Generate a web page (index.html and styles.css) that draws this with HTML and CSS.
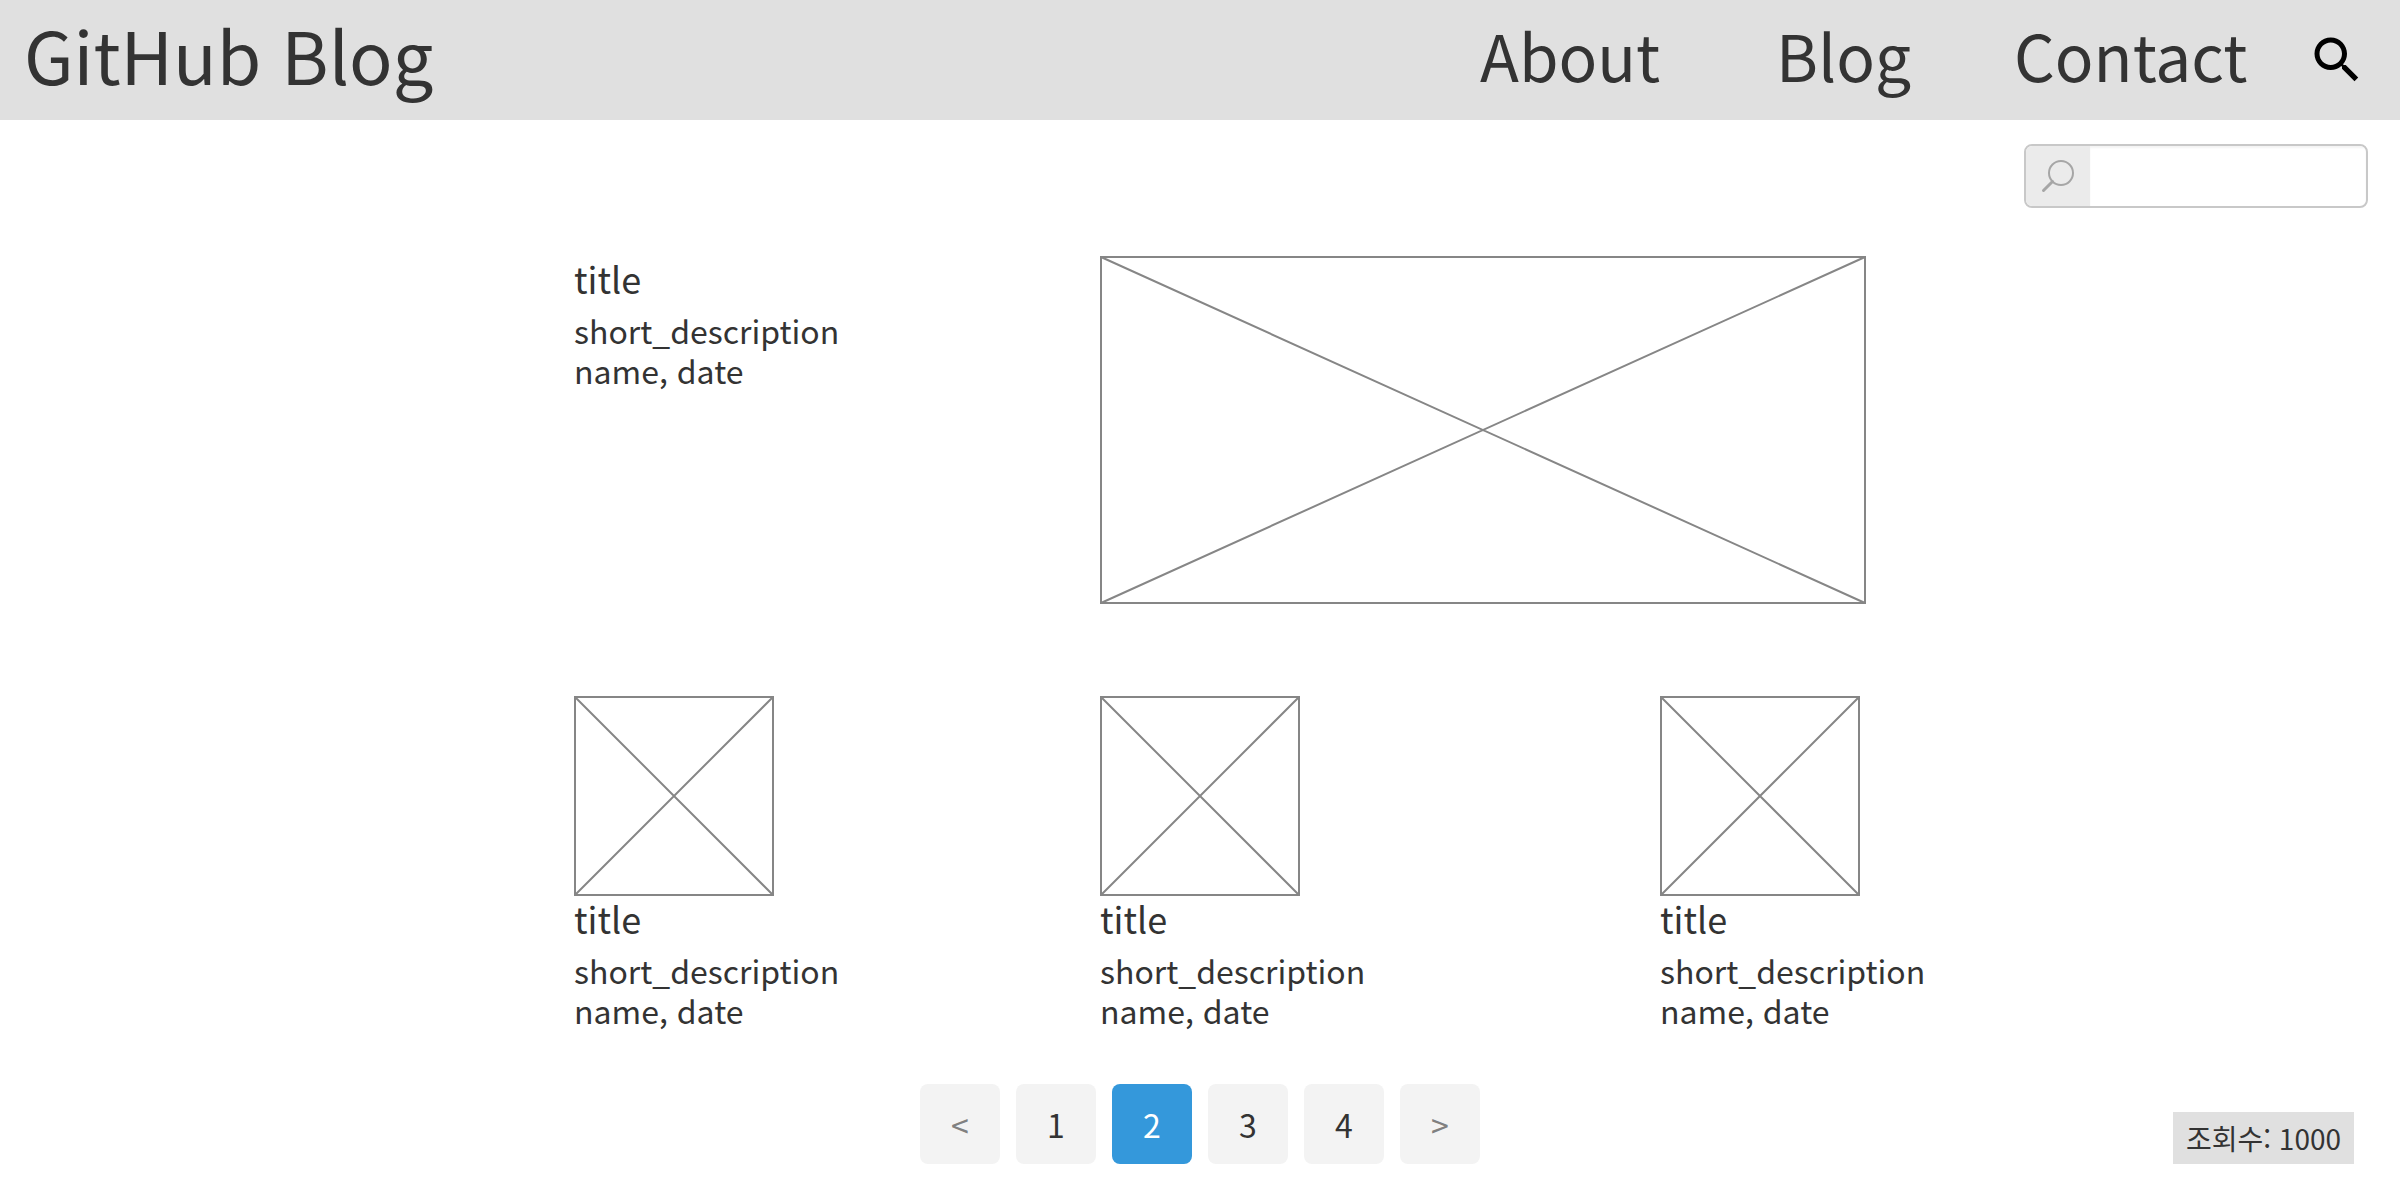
FILE: index.html
```html
<!DOCTYPE html>
<html lang="ko">
<head>
<meta charset="utf-8">
<meta name="viewport" content="width=device-width, initial-scale=1">
<title>GitHub Blog</title>
<link rel="stylesheet" href="styles.css">
</head>
<body>
<header class="topbar">
  <a class="brand" href="#">GitHub Blog</a>
  <nav class="menu">
    <a href="#about">About</a>
    <a href="#blog">Blog</a>
    <a href="#contact">Contact</a>
    <button class="menu-search" type="button" aria-label="Search">
      <svg viewBox="0 0 24 24" width="60" height="60" aria-hidden="true"><path d="M15.5 14h-.79l-.28-.27C15.41 12.59 16 11.11 16 9.5 16 5.91 13.09 3 9.5 3S3 5.91 3 9.5 5.91 16 9.5 16c1.61 0 3.09-.59 4.23-1.57l.27.28v.79l5 4.99L20.49 19l-4.99-5zm-6 0C7.01 14 5 11.99 5 9.5S7.01 5 9.5 5 14 7.01 14 9.5 11.99 14 9.5 14z"/></svg>
    </button>
  </nav>
</header>

<form class="search" role="search">
  <label class="search-icon" for="q" aria-label="Search posts">
    <svg viewBox="0 0 36 36" width="36" height="36" aria-hidden="true"><circle cx="21" cy="15" r="12"/><path class="handle" d="M12.5 23.5 3.5 32.5"/></svg>
  </label>
  <input class="search-input" id="q" type="text">
</form>

<main class="posts">
  <article class="featured">
    <div class="summary">
      <h2 class="title">title</h2>
      <p class="text">short_description</p>
      <p class="text">name, date</p>
    </div>
    <svg class="cover wide" viewBox="0 0 766 348" aria-hidden="true"><rect x="1" y="1" width="764" height="346"/><path d="M1 1 765 347M765 1 1 347"/></svg>
  </article>
  <article class="card">
    <svg class="cover" viewBox="0 0 200 200" aria-hidden="true"><rect x="1" y="1" width="198" height="198"/><path d="M1 1 199 199M199 1 1 199"/></svg>
    <h2 class="title">title</h2>
    <p class="text">short_description</p>
    <p class="text">name, date</p>
  </article>
  <article class="card">
    <svg class="cover" viewBox="0 0 200 200" aria-hidden="true"><rect x="1" y="1" width="198" height="198"/><path d="M1 1 199 199M199 1 1 199"/></svg>
    <h2 class="title">title</h2>
    <p class="text">short_description</p>
    <p class="text">name, date</p>
  </article>
  <article class="card">
    <svg class="cover" viewBox="0 0 200 200" aria-hidden="true"><rect x="1" y="1" width="198" height="198"/><path d="M1 1 199 199M199 1 1 199"/></svg>
    <h2 class="title">title</h2>
    <p class="text">short_description</p>
    <p class="text">name, date</p>
  </article>
</main>

<footer class="bottom">
  <nav class="pages" aria-label="Pages">
    <button class="page step" type="button" aria-label="Previous">&lt;</button>
    <button class="page" type="button">1</button>
    <button class="page current" type="button" aria-current="page">2</button>
    <button class="page" type="button">3</button>
    <button class="page" type="button">4</button>
    <button class="page step" type="button" aria-label="Next">&gt;</button>
  </nav>
  <p class="views">조회수: 1000</p>
</footer>
</body>
</html>
```
FILE: styles.css
```css
* {
  box-sizing: border-box;
}

body {
  margin: 0;
  background: #fff;
  color: #333;
  font-family: "Noto Sans CJK KR", "Noto Sans", sans-serif;
  font-size: 32px;
  line-height: 40px;
}

h2,
p {
  margin: 0;
  font-weight: 400;
}

button,
input {
  border: 0;
  padding: 0;
  font: inherit;
  color: inherit;
  background: none;
}

a {
  color: inherit;
  text-decoration: none;
}

.topbar {
  display: flex;
  justify-content: space-between;
  height: 120px;
  padding: 0 33px 0 24px;
  background: #e0e0e0;
  line-height: 108px;
}

.brand {
  font-size: 72px;
}

.menu {
  display: grid;
  grid-template-columns: 296px 238px 293px 60px;
  font-size: 64px;
}

.menu-search {
  display: flex;
  align-items: center;
  height: 120px;
}

.search {
  display: flex;
  width: 344px;
  height: 64px;
  margin: 24px 32px 0 auto;
  border: 2px solid #c8c8c8;
  border-radius: 8px;
  overflow: hidden;
}

.search-icon {
  display: flex;
  align-items: center;
  justify-content: center;
  width: 64px;
  background: #ebebeb;
}

.search-icon svg {
  fill: none;
  stroke: #a6a6a6;
  stroke-width: 2;
}

.search-icon .handle {
  stroke-width: 3;
  stroke-linecap: round;
}

.search-input {
  flex: 1;
  min-width: 0;
  padding: 0 12px;
  box-shadow: inset 0 2px 2px #f4f4f4;
}

.posts {
  display: grid;
  grid-template-columns: 574fr 526fr 560fr 740fr;
  row-gap: 92px;
  padding-top: 48px;
}

.featured {
  display: grid;
  grid-column: 1 / -1;
  grid-template-columns: subgrid;
}

.summary {
  grid-column: 2;
}

.card:nth-child(2) {
  grid-column-start: 2;
}

.cover {
  display: block;
  width: 200px;
  fill: none;
  stroke: #868686;
  stroke-width: 2;
}

.wide {
  grid-column: 3 / -1;
  width: 100%;
  max-width: 766px;
}

.title {
  margin-bottom: 10px;
  font-size: 36px;
  line-height: 44px;
}

.bottom {
  display: grid;
  grid-template-columns: 1fr auto 1fr;
  align-items: end;
  padding: 54px 46px 36px;
}

.pages {
  display: flex;
  grid-column: 2;
  gap: 16px;
}

.page {
  width: 80px;
  height: 80px;
  border-radius: 8px;
  background: #f3f3f3;
}

.step {
  color: #808080;
}

.current {
  background: #3498db;
  color: #fff;
}

.views {
  justify-self: end;
  padding: 6px 13px;
  background: #e0e0e0;
  font-size: 28px;
}
```
